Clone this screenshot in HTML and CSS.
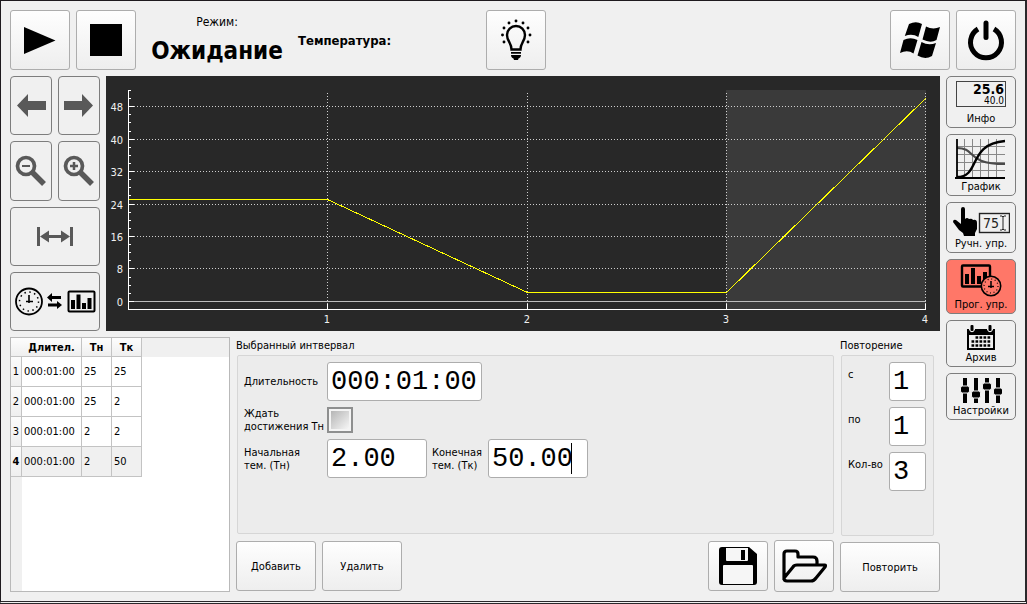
FILE: index.html
```html
<!DOCTYPE html>
<html lang="ru">
<head>
<meta charset="utf-8">
<title>Программное управление</title>
<link rel="stylesheet" href="styles.css">
</head>
<body>
<div class="window">
  <header class="topbar">
    <button class="btn square" aria-label="Пуск"><svg width="60" height="58" viewBox="0 0 60 58"><path d="M14 16 45.500 29.500 14 43z"/></svg></button>
    <button class="btn square" aria-label="Стоп"><svg width="60" height="58" viewBox="0 0 60 58"><path d="M14 13h32v32H14z"/></svg></button>
    <div class="mode"><span>Режим:</span><strong>Ожидание</strong></div>
    <div class="temperature">Температура:</div>
    <button class="btn square" aria-label="Освещение">
      <svg width="60" height="58" viewBox="0 0 60 58">
        <path d="M25.500 38.500C25.500 32 21 30 21 24a9 9 0 0 1 18 0c0 6-4.500 8-4.500 14.500z" fill="none" stroke="#000" stroke-width="2.400"/>
        <path d="M25 41h10v1.800H25zM25 44h10c0 2-1 3-2.500 3.500L32 49h-4l-.5-1.500C26 47 25 46 25 44z"/>
        <path d="M30 10v.01M23 12v.01M37 12v.01M18 17v.01M42 17v.01M16.500 24v.01M44 24v.01M18 31v.01M42 31v.01" stroke="#000" stroke-width="2.900" stroke-linecap="round"/>
      </svg>
    </button>
    <div class="spacer"></div>
    <button class="btn square" aria-label="Windows">
      <svg width="60" height="58" viewBox="0 0 60 58">
        <path d="M19 13q7-3.500 13 0l-3.700 13q-6-4-13.500-1zM36 15.500q7 3.500 14 .5l-3.500 13q-6 3.500-14-.5zM13.500 29q7-3.500 14 0l-4 13.500q-6-4-13.500-.5zM31.500 31q7 4 14.500 1l-4 13q-7 4-14.500-.5z"/>
      </svg>
    </button>
    <button class="btn square" aria-label="Выключить">
      <svg width="60" height="58" viewBox="0 0 60 58"><path d="M22 18a15.500 15.500 0 1 0 16 0" fill="none" stroke="#000" stroke-width="5"/><path d="M30 12v14.500" stroke="#000" stroke-width="5" stroke-linecap="round"/></svg>
    </button>
  </header>

  <div class="body">
    <main class="main">
      <section class="upper">
        <div class="tools">
          <button class="tool" aria-label="Назад"><svg width="40" height="57" viewBox="0 0 40 57"><path d="M6 28.500 17 17v7h18v9H17v7z"/></svg></button>
          <button class="tool" aria-label="Вперёд"><svg width="40" height="57" viewBox="0 0 40 57"><path d="M34 28.500 23 17v7H5v9h18v7z"/></svg></button>
          <button class="tool" aria-label="Уменьшить"><svg width="40" height="57" viewBox="0 0 40 57"><circle cx="15" cy="24" r="8.500" fill="none" stroke="#595959" stroke-width="3.700"/><path d="M11 24h8" stroke="#595959" stroke-width="2"/><path d="m21 30 12 12" stroke="#595959" stroke-width="5.500"/></svg></button>
          <button class="tool" aria-label="Увеличить"><svg width="40" height="57" viewBox="0 0 40 57"><circle cx="15" cy="24" r="8.500" fill="none" stroke="#595959" stroke-width="3.700"/><path d="M11 24h8M15 20v8" stroke="#595959" stroke-width="2.500"/><path d="m21 30 12 12" stroke="#595959" stroke-width="5.500"/></svg></button>
          <button class="tool wide" aria-label="По ширине"><svg width="88" height="57" viewBox="0 0 88 57"><path d="M26 19h3v19h-3zM59 19h3v19h-3zM29 28.500l9-6v4.500h12v-4.500l9 6-9 6V30H38v4.500z"/></svg></button>
          <button class="tool wide" aria-label="Время или интервалы">
            <svg class="ink" width="88" height="57" viewBox="0 0 88 57">
              <circle cx="18" cy="28.500" r="13" fill="none" stroke="#000" stroke-width="1.800"/>
              <circle cx="18" cy="28.500" r="9.500" fill="none" stroke="#000" stroke-width="1.500" stroke-dasharray="1.500 3.474"/>
              <path d="M18 22v8M15 28.500h7" stroke="#000" stroke-width="1.600"/>
              <path d="m36 24.500 5-4.500v3h9v3h-9v3zM51 32l-5-4v2.500h-9v3h9V36z"/>
              <rect x="57.500" y="18.500" width="26" height="20" rx="1" fill="none" stroke="#000" stroke-width="2"/>
              <path d="M60 27h4v9h-4zM65.500 21.500h4V36h-4zM71 30h4v6h-4zM76.500 25h4v11h-4z"/>
            </svg>
          </button>
        </div>
        <div class="chart">
          <svg viewBox="0 0 834 255" role="img" aria-label="График температуры">
            <rect class="selected-range" x="620" y="14" width="200" height="220"/>
            <g class="grid" shape-rendering="crispEdges">
              <path d="M28 30.500H820M28 63.500H820M28 95.500H820M28 128.500H820M28 160.500H820M28 192.500H820"/>
              <path d="M221.500 17V234M421.500 17V234M620.500 17V234M819.500 17V234"/>
            </g>
            <path class="zero" d="M28 225.500H820"/>
            <g class="axis" shape-rendering="crispEdges">
              <path d="M22.500 14V233.500H819.500M221.500 228v6M421.500 228v6M620.500 228v6M819.500 228v6"/>
              <path d="M22 30.500h6M22 63.500h6M22 95.500h6M22 128.500h6M22 160.500h6M22 192.500h6M22 225.500h6"/>
              <path d="M22 14.500h3M22 22.500h3M22 38.500h3M22 46.500h3M22 55.500h3M22 71.500h3M22 79.500h3M22 87.500h3M22 103.500h3M22 111.500h3M22 119.500h3M22 136.500h3M22 144.500h3M22 152.500h3M22 168.500h3M22 176.500h3M22 184.500h3M22 201.500h3M22 209.500h3M22 217.500h3"/>
            </g>
            <path class="curve" d="M23 123.500H221.500L421.500 216.500H620.500L819.500 22.500" shape-rendering="crispEdges"/>
            <g class="ylabels"><text x="17" y="35">48</text><text x="17" y="68">40</text><text x="17" y="100">32</text><text x="17" y="133">24</text><text x="17" y="165">16</text><text x="17" y="197">8</text><text x="17" y="230">0</text></g>
            <g class="xlabels"><text x="221" y="247">1</text><text x="421" y="247">2</text><text x="620" y="247">3</text><text x="819" y="247">4</text></g>
          </svg>
        </div>
      </section>

      <section class="lower">
        <div class="table-frame">
          <table>
            <thead><tr><td></td><th scope="col">Длител.</th><th scope="col">Тн</th><th scope="col">Тк</th></tr></thead>
            <tbody>
              <tr><th scope="row">1</th><td>000:01:00</td><td>25</td><td>25</td></tr>
              <tr><th scope="row">2</th><td>000:01:00</td><td>25</td><td>2</td></tr>
              <tr><th scope="row">3</th><td>000:01:00</td><td>2</td><td>2</td></tr>
              <tr class="current"><th scope="row">4</th><td>000:01:00</td><td>2</td><td>50</td></tr>
            </tbody>
          </table>
        </div>
        <div class="interval">
          <h2>Выбранный интвервал</h2>
          <div class="group">
            <div class="field"><label for="duration">Длительность</label><input id="duration" class="duration" value="000:01:00"></div>
            <div class="field"><label for="wait">Ждать<br>достижения Тн</label><input id="wait" type="checkbox"></div>
            <div class="field"><label for="t-start">Начальная<br>тем. (Тн)</label><input id="t-start" class="temp" value="2.00">
              <label class="second" for="t-end">Конечная<br>тем. (Тк)</label><span class="active-field"><input id="t-end" class="temp" value="50.00"><span class="caret"></span></span></div>
          </div>
          <div class="actions">
            <button class="btn text">Добавить</button>
            <button class="btn text">Удалить</button>
            <div class="spacer"></div>
            <button class="btn file" aria-label="Сохранить">
              <svg width="40" height="40" viewBox="0 0 40 40"><path d="M4 1h27l8 7v28q0 3-3 3H4q-3 0-3-3V4q0-3 3-3z"/><path d="M8 2h22v12q0 1-1 1H9q-1 0-1-1zM5 20q0-1 1-1h28q1 0 1 1v18H5z" fill="#f6f6f6"/><path d="M23 4h4v10h-4z"/></svg>
            </button>
            <button class="btn file open" aria-label="Открыть">
              <svg width="48" height="40" viewBox="0 0 48 40"><path d="M4 34V8q0-3 3-3h8q3 0 3 3v3h15q4 0 4 4v4M4 32 13 21q1-2 4-2h28q1 0 0 2L36 32q-2 3-5 3H7q-3 0-3-3z" fill="none" stroke="#000" stroke-width="3.200" stroke-linejoin="round"/></svg>
            </button>
          </div>
        </div>
        <div class="repeat">
          <h2>Повторение</h2>
          <div class="group">
            <div class="field"><label for="from">с</label><input id="from" value="1"></div>
            <div class="field"><label for="to">по</label><input id="to" value="1"></div>
            <div class="field"><label for="count">Кол-во</label><input id="count" value="3"></div>
          </div>
          <button class="btn text">Повторить</button>
        </div>
      </section>
    </main>

    <nav class="nav">
      <button class="tab"><span class="readout"><b>25.6</b><small>40.0</small></span><span>Инфо</span></button>
      <button class="tab">
        <svg width="52" height="41" viewBox="0 0 52 41"><path d="M9.500 0v38M17.500 0v38M25.500 0v38M33.500 0v38M41.500 0v38M2 7.500h48M2 15.500h48M2 23.500h48M2 31.500h48" stroke="#888" shape-rendering="crispEdges"/><path d="M2 9c20 0 8 16 48 16" fill="none" stroke="#4a4a4a" stroke-width="2.200"/><path d="M2 38c24 0 10-33 48-36" fill="none" stroke="#000" stroke-width="2.400"/><path d="M2 0v40M0 39h50" stroke="#000" stroke-width="1.800"/></svg>
        <span>График</span></button>
      <button class="tab">
        <svg width="58" height="30" viewBox="0 0 58 30"><path d="M9 2q0-2 2-2t2 2v10q2-2 4 0 3-1 4 1 4-1 4 3v6l-2 4v3H12l-1-3-4-3-6-8q0-3 3-2l5 4z"/><rect x="27.500" y="6.500" width="30" height="19" fill="none" stroke="#222" stroke-width="1.400"/><text x="31" y="21" font-size="14" fill="#222">75</text><path d="M48 9h2l1 1 1-1h2M51 10v12M48 23h2l1-1 1 1h2" fill="none" stroke="#222"/></svg>
        <span>Ручн. упр.</span></button>
      <button class="tab active">
        <svg width="42" height="34" viewBox="0 0 42 34"><rect x="2" y="1.500" width="28" height="21" rx="1" fill="none" stroke="#000" stroke-width="2.400"/><path d="M5 10h4v10H5zM11 4h4v16h-4zM17 12h4v8h-4zM23 8h4v12h-4z"/><circle cx="31" cy="22" r="9.700" fill="#ff7768" stroke="#000" stroke-width="1.600"/><circle cx="31" cy="22" r="7" fill="none" stroke="#000" stroke-width="1.200" stroke-dasharray="1 2.665"/><path d="M31 17v7M28 22.500h6" stroke="#000" stroke-width="1.500"/></svg>
        <span>Прог. упр.</span></button>
      <button class="tab">
        <svg width="28" height="26" viewBox="0 0 28 26"><path d="M0 4h28v21H0z"/><path d="M3 3h4v1.500q-2 3.500-4 0zM21 3h4v1.500q-2 3.500-4 0z" fill="none" stroke="#f0f0f0" stroke-width="2"/><rect x="3.500" y="0" width="3" height="6" rx="1"/><rect x="21.500" y="0" width="3" height="6" rx="1"/><path d="M2 10h24v13H2z" fill="#f0f0f0"/><path d="M8.500 12.500h15.500M4.500 16.500h19.500M4.500 20.500h19.500" stroke="#000" stroke-width="2.600" stroke-dasharray="2.700 1.300"/></svg>
        <span>Архив</span></button>
      <button class="tab">
        <svg width="42" height="26" viewBox="0 0 42 26"><path d="M3 0h4v25H3zM14 0h4v25h-4zM25 0h4v25h-4zM36 0h4v25h-4z"/><g stroke="#f0f0f0"><rect x=".5" y="8" width="9" height="7" rx="2"/><rect x="11.500" y="13" width="9" height="7" rx="2"/><rect x="22.500" y="5" width="9" height="7" rx="2"/><rect x="33.500" y="10" width="9" height="7" rx="2"/></g></svg>
        <span>Настройки</span></button>
    </nav>
  </div>
</div>
</body>
</html>
```
FILE: styles.css
```css
* { box-sizing: border-box; }

body {
  margin: 0;
  color: #000;
  background: #f0f0f0;
  font: 11px/13px "DejaVu Sans Condensed", "DejaVu Sans", sans-serif;
}

button, input { font: inherit; color: inherit; margin: 0; }
button { padding: 0; }
svg { display: block; flex: none; }

.window {
  min-height: 100vh;
  display: flex;
  flex-direction: column;
  gap: 6px;
  padding: 9px;
  border: 1px solid #1e1a1e;
  border-right: 2px solid #2a282b;
  border-bottom: 3px double #2a282b;
}

.spacer { flex: 1; }

.topbar { display: flex; align-items: center; gap: 6px; }

.btn {
  display: flex;
  align-items: center;
  justify-content: center;
  border: 1px solid #adadad;
  border-radius: 3px;
  background: linear-gradient(#fefefe, #eeeeee);
}
.square { width: 60px; height: 60px; }

.mode {
  display: flex;
  flex-direction: column;
  align-items: center;
  gap: 8px;
  width: 150px;
  font-size: 12px;
}
.mode strong { font-size: 24px; line-height: 28px; }
.temperature { width: 182px; font-size: 13px; font-weight: bold; }

.body { flex: 1; display: flex; gap: 6px; }
.main { flex: 1; min-width: 0; display: flex; flex-direction: column; gap: 6px; }
.upper { display: flex; gap: 6px; }

.tools {
  width: 90px;
  display: grid;
  grid-template-columns: 1fr 1fr;
  grid-auto-rows: 1fr;
  gap: 6px;
}
.tool {
  display: flex;
  align-items: center;
  justify-content: center;
  border: 1px solid #7d7d7d;
  border-radius: 4px;
  background: #f0f0f0;
  fill: #595959;
}
.tool.wide { grid-column: span 2; }
.ink { fill: #000; }

.chart { flex: 1; background: #282828; }
.chart svg { width: 100%; height: auto; }
.selected-range { fill: #3a3a3a; }
.grid { stroke: #cfcfcf; stroke-dasharray: 1 2; }
.zero { stroke: #bdbdbd; }
.axis { fill: none; stroke: #fff; }
.curve { fill: none; stroke: #ffff00; }
.ylabels, .xlabels { fill: #f0f0f0; font-size: 11px; }
.ylabels { text-anchor: end; }
.xlabels { text-anchor: middle; }

.lower { flex: 1; display: flex; gap: 6px; }

.table-frame {
  width: 220px;
  border: 1px solid #b9b9b9;
  background:
    linear-gradient(#f0f0f0, #f0f0f0) 0 0 / 100% 19px no-repeat,
    linear-gradient(#f0f0f0, #f0f0f0) 0 0 / 11px 100% no-repeat,
    #fff;
}
table { width: 131px; table-layout: fixed; border-collapse: separate; border-spacing: 0; }
th, td {
  height: 30px;
  padding: 0 0 0 2px;
  border-right: 1px solid #c3c3c3;
  border-bottom: 1px solid #c3c3c3;
  text-align: left;
  white-space: nowrap;
}
thead th, thead td { height: 19px; padding: 0; text-align: center; background: linear-gradient(#fdfdfd, #efefef); }
thead td { width: 11px; border-right: 0; }
thead th:nth-child(2) { width: 60px; }
tbody th { padding: 0; text-align: center; font-weight: normal; background: linear-gradient(#fbfbfb, #efefef); }
.current td { background: #f0f0f0; }
.current th { font-weight: bold; }

h2 { margin: 2px 0 3px; font: inherit; }
.group {
  flex: 1;
  display: flex;
  flex-direction: column;
  gap: 6px;
  padding: 6px;
  border: 1px solid #d6d6d6;
  border-radius: 2px;
  background: #ececec;
}
.field { display: flex; align-items: center; }

.interval { flex: 1; min-width: 0; display: flex; flex-direction: column; }
.interval .group { margin-left: 1px; }
.interval label { width: 83px; white-space: nowrap; }
.interval .second { width: 56px; margin-left: 5px; }

.field input:not([type="checkbox"]) {
  height: 39px;
  padding: 0 3px;
  border: 1px solid #adadad;
  border-radius: 3px;
  background: #fff;
  font-family: "Liberation Mono", monospace;
  font-size: 27px;
}
.duration { width: 155px; }
.temp { width: 100px; }
.active-field { position: relative; display: flex; }
.caret { position: absolute; left: 83px; top: 4px; width: 1px; height: 31px; background: #000; }

input[type="checkbox"] {
  appearance: none;
  width: 26px;
  height: 26px;
  padding: 2px;
  border: 2px solid #8e8f8f;
  background: linear-gradient(135deg, #b5b5b5, #f6f6f6) content-box, #f4f4f4;
}

.actions { display: flex; align-items: center; gap: 6px; margin-top: 6px; }
.text { width: 80px; height: 50px; }
.file { width: 60px; height: 50px; }
.file.open { height: 52px; }

.repeat { width: 100px; display: flex; flex-direction: column; }
.repeat .group { margin: 0 6px 6px 1px; padding-right: 7px; }
.repeat .field { justify-content: space-between; align-items: flex-start; }
.repeat label { padding-top: 6px; }
.repeat .field input { width: 37px; }
.repeat .text { width: 100%; }

.nav { width: 70px; display: flex; flex-direction: column; gap: 6px; }
.tab {
  display: flex;
  flex-direction: column;
  align-items: center;
  padding: 4px 0 2px;
  border: 1px solid #7d7d7d;
  border-radius: 5px;
  background: #f0f0f0;
}
.tab.active { background: #ff7768; }
.readout {
  display: flex;
  flex-direction: column;
  align-items: flex-end;
  width: 50px;
  height: 26px;
  margin-bottom: 5px;
  border: 1px solid #444;
  padding-right: 1px;
}
.readout b { font-size: 14px; line-height: 14px; }
.readout small { font-size: 10px; line-height: 10px; }
```
